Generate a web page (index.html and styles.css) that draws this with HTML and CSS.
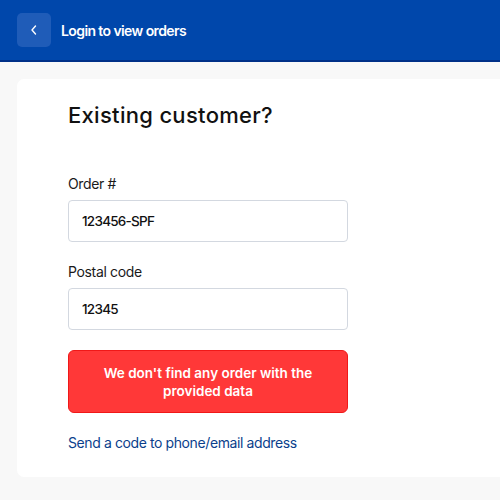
FILE: index.html
```html
<!DOCTYPE html>
<html>
<head>
<meta charset="utf-8">
<link rel="stylesheet" href="styles.css">
</head>
<body>
<header class="topbar">
  <button class="back" aria-label="Back">
    <svg width="8" height="10" viewBox="0 0 8 10"><path d="M5.5 1 L2 5 L5.5 9" fill="none" stroke="#fff" stroke-width="1.4" stroke-linecap="round" stroke-linejoin="round"/></svg>
  </button>
  <span class="title">Login to view orders</span>
</header>
<main class="page">
  <section class="card">
    <h1 class="heading">Existing customer?</h1>
    <label class="label">Order #</label>
    <div class="input">123456-SPF</div>
    <label class="label">Postal code</label>
    <div class="input">12345</div>
    <div class="error">We don't find any order with the provided data</div>
    <a class="link" href="#">Send a code to phone/email address</a>
  </section>
</main>
</body>
</html>
```

FILE: styles.css
```css
* { box-sizing: border-box; }
html, body { margin: 0; padding: 0; }
body {
  width: 500px;
  height: 500px;
  overflow: hidden;
  background: #f8f8f8;
  font-family: Inter, "Noto Sans", sans-serif;
}
.topbar {
  height: 62px;
  background: #0047ab;
  border-bottom: 2px solid #003087;
  display: flex;
  align-items: center;
  padding: 0 0 0 17px;
  gap: 10px;
}
.back {
  width: 34px;
  height: 34px;
  border: none;
  border-radius: 5px;
  background: #1f5cb8;
  display: flex;
  align-items: center;
  justify-content: center;
  padding: 0;
}
.title {
  color: #fff;
  font-size: 14px;
  font-weight: 600;
  letter-spacing: -0.6px;
  margin-top: 1px;
}
.page {
  padding: 17px 0 0 17px;
}
.card {
  background: #fff;
  border-radius: 7px 0 0 7px;
  height: 398px;
  padding: 21px 0 0 51px;
  display: flex;
  flex-direction: column;
  align-items: flex-start;
}
.heading {
  margin: 0;
  font-size: 22px;
  font-weight: 500;
  color: #111;
  letter-spacing: 0.3px;
  line-height: 30px;
}
.label {
  margin-top: 45px;
  font-size: 14px;
  color: #1a1a1a;
  line-height: 18px;
  letter-spacing: -0.35px;
}
.label + .input { margin-top: 7px; }
.input + .label { margin-top: 21px; }
.input {
  width: 280px;
  height: 42px;
  border: 1px solid #d3d8e0;
  border-radius: 4px;
  padding: 0 13px;
  display: flex;
  align-items: center;
  font-size: 13.5px;
  font-weight: 500;
  letter-spacing: -0.75px;
  color: #111;
}
.error {
  margin-top: 20px;
  width: 280px;
  height: 63px;
  background: #ff3838;
  border: 1px solid #f01818;
  border-radius: 6px;
  color: #fff;
  font-weight: 600;
  font-size: 13.5px;
  line-height: 18px;
  text-align: center;
  display: flex;
  align-items: center;
  justify-content: center;
  padding: 0 30px;
}
.link {
  margin-top: 21px;
  font-size: 14px;
  color: #0b3f8c;
  text-decoration: none;
  line-height: 18px;
  letter-spacing: -0.4px;
}
```
